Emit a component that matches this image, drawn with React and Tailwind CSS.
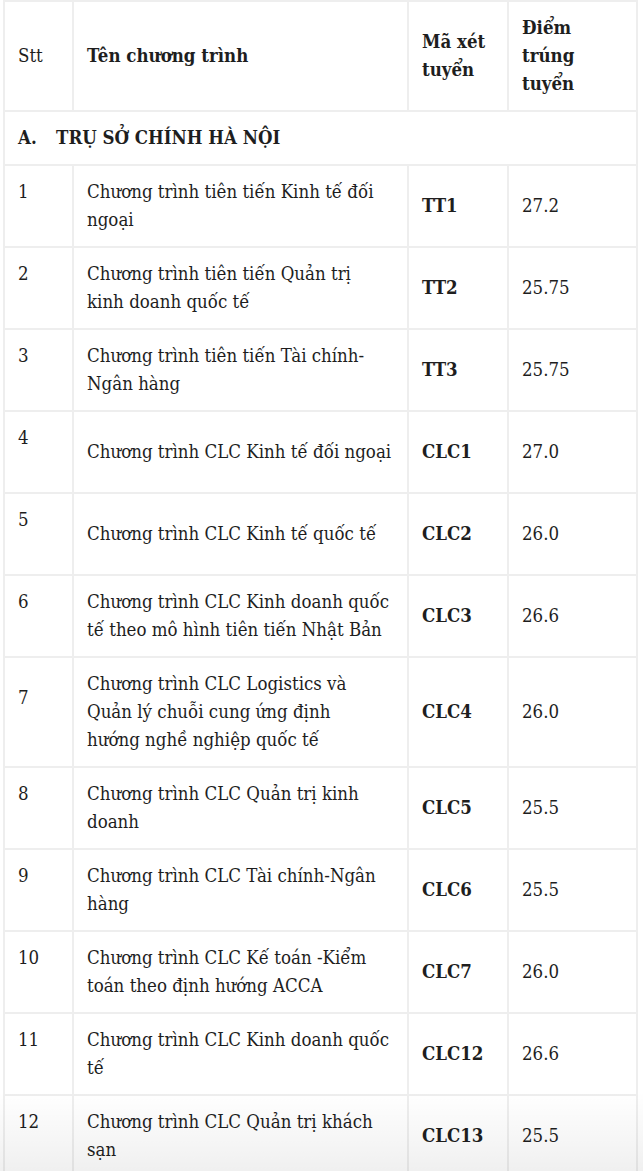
import React from "react";

const rows = [
  ["1", ["Chương trình tiên tiến Kinh tế đối", "ngoại"], "TT1", "27.2"],
  ["2", ["Chương trình tiên tiến Quản trị", "kinh doanh quốc tế"], "TT2", "25.75"],
  ["3", ["Chương trình tiên tiến Tài chính-", "Ngân hàng"], "TT3", "25.75"],
  ["4", ["Chương trình CLC Kinh tế đối ngoại"], "CLC1", "27.0"],
  ["5", ["Chương trình CLC Kinh tế quốc tế"], "CLC2", "26.0"],
  ["6", ["Chương trình CLC Kinh doanh quốc", "tế theo mô hình tiên tiến Nhật Bản"], "CLC3", "26.6"],
  ["7", ["Chương trình CLC Logistics và", "Quản lý chuỗi cung ứng định", "hướng nghề nghiệp quốc tế"], "CLC4", "26.0"],
  ["8", ["Chương trình CLC Quản trị kinh", "doanh"], "CLC5", "25.5"],
  ["9", ["Chương trình CLC Tài chính-Ngân", "hàng"], "CLC6", "25.5"],
  ["10", ["Chương trình CLC Kế toán -Kiểm", "toán theo định hướng ACCA"], "CLC7", "26.0"],
  ["11", ["Chương trình CLC Kinh doanh quốc", "tế"], "CLC12", "26.6"],
  ["12", ["Chương trình CLC Quản trị khách", "sạn"], "CLC13", "25.5"],
];

const cell = "border-2 border-[#eeeeee] px-[13px] py-[12px] align-middle";

export default function App() {
  return (
    <div
      className="relative h-[1171px] overflow-hidden bg-white text-[#1e1e1e] text-[18.5px] leading-[28px]"
      style={{ fontFamily: '"DejaVu Serif Condensed", "DejaVu Serif", "Liberation Serif", serif' }}
    >
      <table className="ml-[3px] w-[633px] table-fixed border-collapse">
        <colgroup>
          <col className="w-[69px]" />
          <col className="w-[335px]" />
          <col className="w-[100px]" />
          <col className="w-[129px]" />
        </colgroup>
        <tbody>
          <tr>
            <td className={cell}>Stt</td>
            <td className={cell + " font-bold"}>Tên chương trình</td>
            <td className={cell + " font-bold"}>Mã xét<br />tuyển</td>
            <td className={cell + " font-bold"}>Điểm<br />trúng<br />tuyển</td>
          </tr>
          <tr>
            <td className={cell + " font-bold"} colSpan={4}>
              <div className="flex">
                <span className="w-[38px] shrink-0">A.</span>
                <span>TRỤ SỞ CHÍNH HÀ NỘI</span>
              </div>
            </td>
          </tr>
          {rows.map(([n, lines, code, score]) => (
            <tr key={n}>
              <td className={cell}>
                <div className="pb-[28px]">{n}</div>
              </td>
              <td className={cell + " whitespace-nowrap"}>
                {lines.map((l, i) => (
                  <div key={i}>{l}</div>
                ))}
              </td>
              <td className={cell + " font-bold"}>{code}</td>
              <td className={cell}>{score}</td>
            </tr>
          ))}
        </tbody>
      </table>
      <div className="pointer-events-none absolute bottom-0 left-0 right-0 h-[80px] bg-gradient-to-b from-transparent to-black/[0.06]" />
    </div>
  );
}
